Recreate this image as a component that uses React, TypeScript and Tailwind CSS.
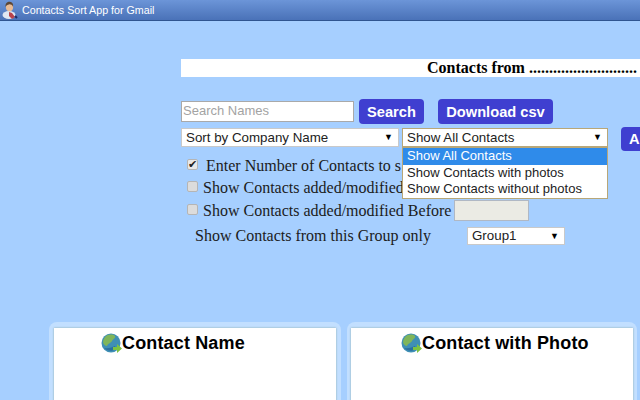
const sans = "font-['Liberation_Sans',Arial,sans-serif]";
const serif = "font-['Liberation_Serif','Times_New_Roman',serif]";

function Caret() {
  return <span className="text-[9px] leading-none text-black">▼</span>;
}

function UserIcon() {
  return (
    <svg width="18" height="18" viewBox="0 0 18 18" className="ml-[1px] shrink-0">
      <ellipse cx="8" cy="14" rx="6.5" ry="4" fill="#dfe6f2" />
      <path d="M8 11l3 1 3 4-3 2-3-3z" fill="#b8434c" />
      <ellipse cx="8.500" cy="6" rx="3.600" ry="4.400" fill="#e8bb96" />
      <path d="M4.600 6c-.6-3.800 2-5.400 4.200-5.200 2.400.2 3.800 2 3.200 5-.8-2-2.400-2.600-4-2.400-1.600.2-2.800 1-3.400 2.600z" fill="#5b4636" />
      <path d="M14 15l2 2" stroke="#1c2f6a" strokeWidth="2" />
    </svg>
  );
}

function GlobeIcon() {
  return (
    <svg width="21" height="21" viewBox="0 0 21 21" className="shrink-0">
      <circle cx="10" cy="10" r="9.500" fill="#3f8fb5" />
      <path d="M4 4c3-3 8-3 10-1 1 2-2 3-3 5-1 2-4 2-5 5-2 0-4-2-4-4 0-2 1-3 2-5z" fill="#7fb55a" />
      <path d="M3 15c3 3 8 4 12 1l-1-3c-3 1-6 3-11 2z" fill="#2a6fa0" />
      <path d="M12 14h4v-3l5 4.500-5 4.500v-3h-4z" fill="#7cc242" />
    </svg>
  );
}

function Select({ label, className }: { label: string; className: string }) {
  return (
    <div className={`flex items-center justify-between bg-white text-[13.33px] text-[#222] ${sans} ${className}`}>
      <span className="whitespace-nowrap">{label}</span>
      <Caret />
    </div>
  );
}

function Card({ title, className, headClass }: { title: string; className: string; headClass: string }) {
  return (
    <div className={`h-[90px] shrink-0 rounded-t-[8px] bg-[#c2dfff] pt-[6px] ${className}`}>
      <div className={`flex h-full items-start bg-white shadow-[0_0_2px_#8aa] ${headClass}`}>
        <GlobeIcon />
        <span className={`text-[18px] font-bold leading-[21px] tracking-[0.15px] text-black ${sans}`}>{title}</span>
      </div>
    </div>
  );
}

export default function App() {
  return (
    <div className="h-[400px] w-[640px] overflow-hidden bg-[#a6cfff]">
      {/* title bar */}
      <div className="flex h-[21px] items-center gap-[3px] border-b border-[#2f5590] bg-gradient-to-b from-[#6c95d8] to-[#4a72b8]">
        <UserIcon />
        <span className={`text-[10.7px] text-white ${sans}`}>Contacts Sort App for Gmail</span>
      </div>

      <div className="h-[301px] pl-[181px] pt-[38px]">
        {/* banner */}
        <div className={`flex h-[18px] w-[600px] items-center bg-white pl-[246px] text-[16px] font-bold text-black ${serif}`}>
          <span className="whitespace-nowrap">Contacts from ...........................</span>
        </div>

        {/* search */}
        <div className="mt-[22px] flex items-center">
          <div className={`flex h-[21px] w-[173px] items-center border border-[#a9a9a9] bg-white pb-[1px] pl-[1px] text-[13px] text-[#a3a3a3] ${sans}`}>
            Search Names
          </div>
          <button className={`ml-[5px] h-[25px] w-[65px] rounded-[4px] bg-[#3f3fd0] text-[14.67px] font-bold text-white ${sans}`}>
            Search
          </button>
          <button className={`ml-[14px] h-[25px] w-[115px] rounded-[4px] bg-[#3f3fd0] text-[14.67px] font-bold text-white ${sans}`}>
            Download csv
          </button>
        </div>

        {/* selects */}
        <div className="relative mt-[3px] flex h-[24px] w-[500px] items-start">
          <Select label="Sort by Company Name" className="mt-[1px] h-[19px] w-[218px] border border-[#c9c9c9] pl-[4px] pr-[5px]" />
          <Select
            label="Show All Contacts"
            className="ml-[3px] mt-[1px] h-[19px] w-[206px] border border-[#b8a778] pl-[4px] pr-[5px]"
          />
          <button className={`ml-[13px] h-[24px] w-[40px] shrink-0 rounded-[4px] bg-[#3f3fd0] pl-[8px] text-left text-[14.67px] font-bold text-white ${sans}`}>
            A
          </button>
          <div className={`absolute left-[221px] top-[20px] z-10 w-[206px] border border-[#b8a778] bg-white text-[13px] leading-[16px] text-[#222] ${sans}`}>
            <div className="h-[17px] bg-[#2f8bea] pl-[4px] text-white">Show All Contacts</div>
            <div className="h-[16px] pl-[4px]">Show Contacts with photos</div>
            <div className="h-[17px] pl-[4px]">Show Contacts without photos</div>
          </div>
        </div>

        {/* filter rows */}
        <div className={`text-[16px] text-[#1c1c1c] ${serif}`}>
          <div className="mt-[3px] flex h-[23px] items-center whitespace-nowrap pl-[6px]">
            <span className="mb-[2px] flex h-[11px] w-[11px] items-center justify-center rounded-[2px] border border-[#b5b5b5] bg-[#e8e8e8] text-[11px] leading-none text-[#222]">
              ✔
            </span>
            <span className="ml-[8px]">Enter Number of Contacts to s</span>
          </div>
          <div className="flex h-[21px] items-center whitespace-nowrap pl-[6px]">
            <span className="mb-[2px] h-[11px] w-[11px] rounded-[2px] border border-[#b5b5b5] bg-[#dcdcdc]" />
            <span className="ml-[5px]">Show Contacts added/modified</span>
          </div>
          <div className="flex h-[25px] items-center whitespace-nowrap pl-[6px]">
            <span className="mb-[2px] h-[11px] w-[11px] rounded-[2px] border border-[#b5b5b5] bg-[#dcdcdc]" />
            <span className="ml-[5px]">Show Contacts added/modified Before</span>
            <span className="ml-[3px] h-[21px] w-[75px] border border-[#b0b8c4] bg-[#ebebe4]" />
          </div>
          <div className="mt-[4px] flex h-[18px] items-center whitespace-nowrap pl-[14px]">
            <span className="w-[272px]">Show Contacts from this Group only</span>
            <Select label="Group1" className="h-[18px] w-[98px] border border-[#c9c9c9] pl-[4px] pr-[5px]" />
          </div>
        </div>
      </div>

      {/* cards */}
      <div className="flex gap-[6px] pl-[49px]">
        <Card title="Contact Name" className="w-[292px] pl-[5px] pr-[5px]" headClass="pl-[47px] pt-[5px]" />
        <Card title="Contact with Photo" className="w-[290px] pl-[4px] pr-[4px]" headClass="pl-[50px] pt-[5px]" />
      </div>
    </div>
  );
}
